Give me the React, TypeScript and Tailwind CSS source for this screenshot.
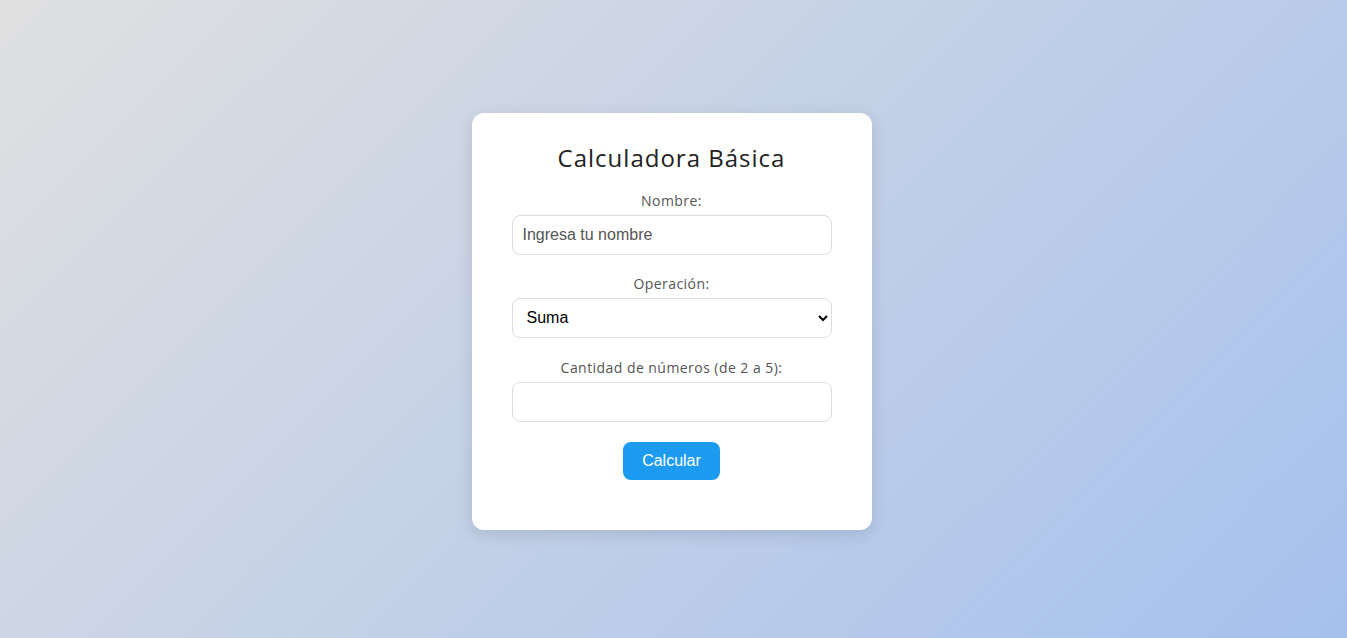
import { useState } from "react";

export default function App() {
  const [nombre, setNombre] = useState("");
  const [operacion, setOperacion] = useState("suma");
  const [cantidad, setCantidad] = useState("");

  return (
    <div className="flex items-center justify-center min-h-screen bg-[linear-gradient(135deg,#e0e0e0,#a6c1ee)] font-['Liberation_Sans',Arial,sans-serif]">
      <div className="w-[400px] mt-[4px] mr-[4px] px-10 pt-[30px] pb-[50px] bg-white rounded-xl shadow-[0_4px_16px_rgba(0,0,0,0.12)] text-center">
        {/* Title */}
        <h2 className="mb-[20px] text-[24px] leading-[29px] font-medium tracking-[1px] text-[#222] font-['Open_Sans','Noto_Sans',sans-serif]">
          Calculadora Básica
        </h2>

        <label className="block mb-[6px] text-[14px] leading-[17px] tracking-[0.45px] text-[#555] font-['Open_Sans','Noto_Sans',sans-serif]">
          Nombre:
        </label>
        <input
          type="text"
          value={nombre}
          onChange={(e) => setNombre(e.target.value)}
          placeholder="Ingresa tu nombre"
          className="block w-full h-10 px-[10px] mb-[20px] text-[16px] text-black placeholder:text-[#555] border border-[#ddd] rounded-lg bg-white focus:outline-none"
        />

        <label className="block mb-[6px] text-[14px] leading-[17px] tracking-[0.45px] text-[#555] font-['Open_Sans','Noto_Sans',sans-serif]">
          Operación:
        </label>
        <select
          value={operacion}
          onChange={(e) => setOperacion(e.target.value)}
          className="block w-full h-10 px-[10px] mb-[21px] text-[16px] text-black border border-[#ddd] rounded-lg bg-white focus:outline-none"
        >
          <option value="suma">Suma</option>
          <option value="resta">Resta</option>
          <option value="multiplicacion">Multiplicación</option>
          <option value="division">División</option>
        </select>

        <label className="block mb-[6px] text-[14px] leading-[17px] tracking-[0.45px] text-[#555] font-['Open_Sans','Noto_Sans',sans-serif]">
          Cantidad de números (de 2 a 5):
        </label>
        <input
          type="number"
          min={2}
          max={5}
          value={cantidad}
          onChange={(e) => setCantidad(e.target.value)}
          className="block w-full h-10 px-[10px] mb-[20px] text-[16px] text-black border border-[#ddd] rounded-lg bg-white focus:outline-none"
        />

        <button className="h-[38px] px-[19px] text-[16px] text-white bg-[#1d9bf0] rounded-lg hover:bg-[#1a8cd8]">
          Calcular
        </button>
      </div>
    </div>
  );
}
